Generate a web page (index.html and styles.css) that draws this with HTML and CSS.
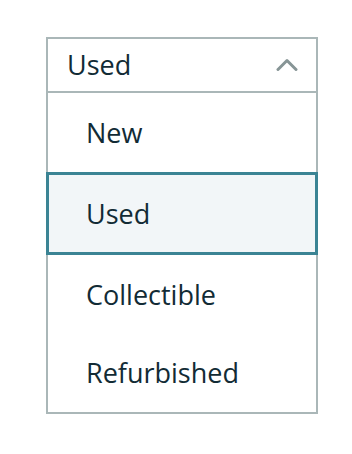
FILE: index.html
```html
<!DOCTYPE html>
<html lang="en">
<head>
<meta charset="utf-8">
<link rel="stylesheet" href="styles.css">
</head>
<body>
<div class="dropdown">
  <div class="select">
    <span class="value">Used</span>
    <svg class="chevron" width="22" height="13" viewBox="0 0 22 13"><path d="M2 11.5 L11 2.5 L20 11.5" fill="none" stroke="#879596" stroke-width="3" stroke-linecap="round" stroke-linejoin="round"/></svg>
  </div>
  <ul class="list">
    <li class="option first">New</li>
    <li class="option selected">Used</li>
    <li class="option">Collectible</li>
    <li class="option last">Refurbished</li>
  </ul>
</div>
</body>
</html>
```
FILE: styles.css
```css
html, body {
  margin: 0;
  padding: 0;
  background: #ffffff;
}
body {
  padding: 37px 0 0 46px;
  font-family: "Open Sans", "Noto Sans", sans-serif;
  color: #122b35;
}
.dropdown {
  width: 272px;
  position: relative;
}
.select {
  box-sizing: border-box;
  height: 56px;
  border: 2px solid #aab7b8;
  display: flex;
  align-items: center;
  justify-content: space-between;
  padding: 0 18px 0 19px;
}
.value {
  font-size: 27px;
  font-weight: 500;
  line-height: 1;
  padding-bottom: 2px;
}
.chevron {
  display: block;
  margin-top: -2px;
}
.list {
  list-style: none;
  margin: 0;
  padding: 0;
  position: relative;
}
.list::before {
  content: "";
  position: absolute;
  left: 2px;
  right: 2px;
  top: 36px;
  bottom: 20px;
  box-shadow: 0 0 6px rgba(0, 0, 0, 0.12);
  z-index: -1;
}
.option {
  box-sizing: border-box;
  height: 78px;
  display: flex;
  align-items: center;
  padding-left: 38px;
  font-size: 27px;
  font-weight: 500;
  border-left: 2px solid #aab7b8;
  border-right: 2px solid #aab7b8;
  background: #ffffff;
}
.option.first {
  height: 79px;
}
.option.selected {
  height: 83px;
  border: 3px solid #3b8494;
  padding-left: 37px;
  background: #f2f6f8;
}
.option.last {
  height: 81px;
  border-bottom: 2px solid #aab7b8;
}
```
